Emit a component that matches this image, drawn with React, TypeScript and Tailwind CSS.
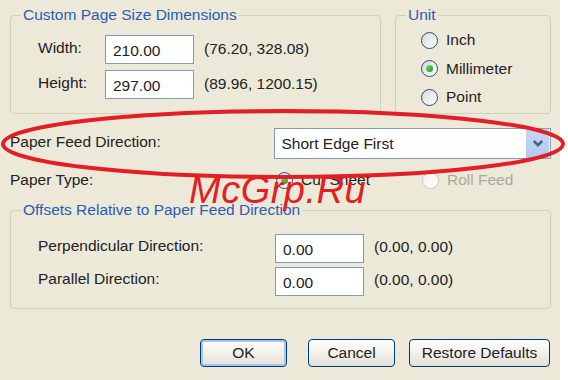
import React from 'react';

const font = "font-['Liberation_Sans',Arial,sans-serif]";

const Radio: React.FC<{ label: string; checked?: boolean; disabled?: boolean }> = ({ label, checked, disabled }) => (
  <div className="flex items-center h-[20px]">
    <span
      className={`flex items-center justify-center w-[17px] h-[17px] rounded-full border bg-gradient-to-br ${
        disabled ? 'border-[#cac8bb] from-[#f2f1ec] to-white' : 'border-[#1c5180] from-[#d8d8d2] to-white'
      }`}
    >
      {checked && <span className="w-[7px] h-[7px] rounded-full bg-gradient-to-br from-[#6ee06e] to-[#1f9a1f]" />}
    </span>
    <span className={`ml-[8px] ${disabled ? 'text-[#aca899]' : 'text-[#222]'}`}>{label}</span>
  </div>
);

const Field: React.FC<{ value: string; w?: string }> = ({ value, w = 'w-[89px]' }) => (
  <div className={`${w} h-[29px] bg-white border border-[#7f9db9] flex items-center pl-[7px] pt-[2px] text-[#222]`}>{value}</div>
);

const Btn: React.FC<{ label: string; w: string; primary?: boolean }> = ({ label, w, primary }) => (
  <button
    className={`${w} h-[28px] rounded-[4px] border border-[#003c74] bg-gradient-to-b from-white to-[#e3e1d6] text-[#222] ${
      primary ? 'shadow-[inset_0_0_0_2px_#a9c4f0]' : ''
    }`}
  >
    {label}
  </button>
);

export default function App() {
  return (
    <div className={`relative w-[560px] h-[380px] bg-[#ece9d8] text-[15.5px] leading-[18px] text-[#222] ${font}`}>
      <div className="flex flex-col pl-[10px] pr-[9px] pt-[6px]">
        {/* top groups */}
        <div className="flex gap-[14px]">
          <fieldset className="w-[371px] h-[108px] border border-[#d0d0bf] rounded-[4px] pl-[27px] pt-[11px]">
            <legend className="-ml-[17px] px-[2px] text-[#2d5bb8]">Custom Page Size Dimensions</legend>
            <div className="flex flex-col gap-[6px]">
              <div className="flex items-center">
                <span className="w-[67px] pb-[3px]">Width:</span>
                <Field value="210.00" />
                <span className="ml-[10px] pb-[2px]">(76.20, 328.08)</span>
              </div>
              <div className="flex items-center">
                <span className="w-[67px] pb-[3px]">Height:</span>
                <Field value="297.00" />
                <span className="ml-[10px] pb-[2px]">(89.96, 1200.15)</span>
              </div>
            </div>
          </fieldset>
          <fieldset className="w-[156px] h-[108px] border border-[#d0d0bf] rounded-[4px] pl-[25px] pt-[6px]">
            <legend className="-ml-[15px] px-[2px] text-[#2d5bb8]">Unit</legend>
            <div className="flex flex-col gap-[8.5px]">
              <Radio label="Inch" />
              <Radio label="Millimeter" checked />
              <Radio label="Point" />
            </div>
          </fieldset>
        </div>

        {/* paper feed */}
        <div className="flex items-center mt-[14px] h-[31px]">
          <span className="w-[264px] pb-[4px]">Paper Feed Direction:</span>
          <div className="w-[278px] h-[31px] bg-white border border-[#7f9db9] flex items-center">
            <span className="flex-1 pl-[7px]">Short Edge First</span>
            <span className="w-[23px] h-[29px] mr-[1px] bg-gradient-to-b from-[#c6d6f7] to-[#b4c8f2] flex items-center justify-center">
              <svg width="12" height="9" viewBox="0 0 12 9">
                <path d="M1.8 2 L6 6.2 L10.2 2" stroke="#4d6185" strokeWidth="2.6" fill="none" />
              </svg>
            </span>
          </div>
        </div>

        {/* paper type */}
        <div className="flex items-center mt-[11px] h-[20px]">
          <span className="w-[266px]">Paper Type:</span>
          <div className="w-[146px]">
            <Radio label="Cut Sheet" checked />
          </div>
          <Radio label="Roll Feed" disabled />
        </div>

        {/* offsets */}
        <fieldset className="mt-[11px] w-[541px] h-[108px] border border-[#d0d0bf] rounded-[4px] pl-[27px] pt-[15px]">
          <legend className="-ml-[17px] px-[2px] text-[#2d5bb8]">Offsets Relative to Paper Feed Direction</legend>
          <div className="flex flex-col gap-[4px]">
            <div className="flex items-center">
              <span className="w-[237px] pb-[6px]">Perpendicular Direction:</span>
              <Field value="0.00" />
              <span className="ml-[10px] pb-[4px]">(0.00, 0.00)</span>
            </div>
            <div className="flex items-center">
              <span className="w-[237px] pb-[6px]">Parallel Direction:</span>
              <Field value="0.00" />
              <span className="ml-[10px] pb-[4px]">(0.00, 0.00)</span>
            </div>
          </div>
        </fieldset>

        {/* buttons */}
        <div className="flex justify-end mt-[30px] pr-[1px] gap-[14px]">
          <div className="mr-[7px]">
            <Btn label="OK" w="w-[87px]" primary />
          </div>
          <Btn label="Cancel" w="w-[87px]" />
          <Btn label="Restore Defaults" w="w-[141px]" />
        </div>
      </div>

      {/* red annotation overlay */}
      <svg className="absolute left-0 top-0 pointer-events-none" width="568" height="380">
        <ellipse cx="283" cy="144" rx="280" ry="33" stroke="#e31e24" strokeWidth="4" fill="none" />
      </svg>
      <span className="absolute left-[189px] top-[171px] text-[38px] leading-[38px] italic tracking-[0.5px] text-[#e31e24] font-['Liberation_Sans',Arial,sans-serif]">
        McGrp.Ru
      </span>
    </div>
  );
}
